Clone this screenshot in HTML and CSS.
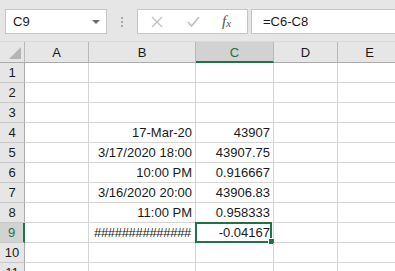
FILE: index.html
```html
<!DOCTYPE html>
<html lang="en">
<head>
    <meta charset="UTF-8">
    <title>Book1 - Excel</title>
    <link rel="stylesheet" href="styles.css">
</head>
<body>
    <div class="formula-bar">
        <div class="name-box">
            <span>C9</span>
            <svg class="drop" width="8" height="4" viewBox="0 0 8 4"><path d="M0 0h8L4 4z" fill="#6d6d6d"/></svg>
        </div>
        <div class="grip"><i></i><i></i><i></i></div>
        <div class="fx-buttons">
            <svg width="12" height="12" viewBox="0 0 12 12"><path d="M1 1l10 10M11 1L1 11" stroke="#c3c3c3" stroke-width="1.4"/></svg>
            <svg width="13" height="11" viewBox="0 0 13 11"><path d="M1 6l3.5 4L12 1" stroke="#c3c3c3" stroke-width="1.8" fill="none"/></svg>
            <span class="fx">f<sub>x</sub></span>
        </div>
        <div class="formula-input">=C6-C8</div>
    </div>

    <div class="sheet">
        <div class="corner"></div>
        <div class="col-head">A</div>
        <div class="col-head">B</div>
        <div class="col-head active">C</div>
        <div class="col-head">D</div>
        <div class="col-head">E</div>

        <div class="row-head">1</div><div class="cell"></div><div class="cell"></div><div class="cell"></div><div class="cell"></div><div class="cell"></div>
        <div class="row-head">2</div><div class="cell"></div><div class="cell"></div><div class="cell"></div><div class="cell"></div><div class="cell"></div>
        <div class="row-head">3</div><div class="cell"></div><div class="cell"></div><div class="cell"></div><div class="cell"></div><div class="cell"></div>
        <div class="row-head">4</div><div class="cell"></div><div class="cell">17-Mar-20</div><div class="cell">43907</div><div class="cell"></div><div class="cell"></div>
        <div class="row-head">5</div><div class="cell"></div><div class="cell">3/17/2020 18:00</div><div class="cell">43907.75</div><div class="cell"></div><div class="cell"></div>
        <div class="row-head">6</div><div class="cell"></div><div class="cell">10:00 PM</div><div class="cell">0.916667</div><div class="cell"></div><div class="cell"></div>
        <div class="row-head">7</div><div class="cell"></div><div class="cell">3/16/2020 20:00</div><div class="cell">43906.83</div><div class="cell"></div><div class="cell"></div>
        <div class="row-head">8</div><div class="cell"></div><div class="cell">11:00 PM</div><div class="cell">0.958333</div><div class="cell"></div><div class="cell"></div>
        <div class="row-head active">9</div><div class="cell"></div><div class="cell hashes">##############</div><div class="cell selected">-0.04167</div><div class="cell"></div><div class="cell"></div>
        <div class="row-head">10</div><div class="cell"></div><div class="cell"></div><div class="cell"></div><div class="cell"></div><div class="cell"></div>
        <div class="row-head">11</div><div class="cell"></div><div class="cell"></div><div class="cell"></div><div class="cell"></div><div class="cell"></div>
    </div>
</body>
</html>
```

FILE: styles.css
```css
body {
    margin: 0;
    font-family: "Liberation Sans", Arial, sans-serif;
    font-size: 13px;
    color: #1a1a1a;
    background-color: #fff;
    width: 395px;
    height: 271px;
    overflow: hidden;
}
.formula-bar {
    display: flex;
    align-items: flex-start;
    height: 42px;
    padding: 9px 0 0 5px;
    box-sizing: border-box;
    background-color: #e6e6e6;
    border-bottom: 1px solid #dadada;
}
.name-box {
    width: 102px;
    height: 25px;
    box-sizing: border-box;
    background-color: #fff;
    border: 1px solid #c6c6c6;
    display: flex;
    align-items: center;
    justify-content: space-between;
    padding: 0 6px 0 7px;
}
.grip {
    width: 30px;
    height: 25px;
    display: flex;
    flex-direction: column;
    align-items: center;
    justify-content: center;
    gap: 2px;
}
.grip i {
    width: 2px;
    height: 2px;
    background-color: #a8a8a8;
}
.fx-buttons {
    width: 111px;
    height: 25px;
    box-sizing: border-box;
    background-color: #fff;
    border: 1px solid #c6c6c6;
    display: flex;
    align-items: center;
    padding-left: 13px;
    gap: 24px;
}
.fx {
    font-family: "Liberation Serif", serif;
    font-style: italic;
    font-size: 15px;
    color: #555;
    margin-left: -2px;
}
.fx sub {
    font-size: 11px;
    vertical-align: -1px;
}
.formula-input {
    flex: 1;
    height: 25px;
    box-sizing: border-box;
    margin-left: 3px;
    background-color: #fff;
    border: 1px solid #c6c6c6;
    border-right: none;
    padding: 4px 0 0 11px;
}
.sheet {
    display: grid;
    grid-template-columns: 25px 64px 107px 78px 64px 64px;
    grid-template-rows: 21px repeat(11, 20px);
    width: 402px;
}
.corner,
.col-head,
.row-head,
.cell {
    box-sizing: border-box;
    border-right: 1px solid #d4d4d4;
    border-bottom: 1px solid #d4d4d4;
    position: relative;
}
.corner {
    background-color: #e6e6e6;
    border-right-color: #b8b8b8;
    border-bottom-color: #ababab;
}
.corner::after {
    content: "";
    position: absolute;
    right: 3px;
    bottom: 3px;
    border-left: 12px solid transparent;
    border-bottom: 12px solid #b5b5b5;
}
.col-head {
    background-color: #e6e6e6;
    border-right-color: #b8b8b8;
    border-bottom-color: #ababab;
    text-align: center;
    line-height: 21px;
}
.col-head.active {
    background-color: #d2d2d2;
    color: #217346;
    border-bottom: 2px solid #217346;
}
.row-head {
    background-color: #e6e6e6;
    border-right-color: #ababab;
    border-bottom-color: #c8c8c8;
    text-align: center;
    line-height: 20px;
}
.row-head.active {
    background-color: #d2d2d2;
    color: #217346;
    border-right: 2px solid #217346;
}
.cell {
    text-align: right;
    padding-right: 3px;
    line-height: 20px;
    white-space: nowrap;
}
.hashes {
    letter-spacing: -0.3px;
    padding-right: 4px;
}
.selected::before {
    content: "";
    position: absolute;
    left: -1px;
    top: -1px;
    right: 1px;
    bottom: -1px;
    border: 2px solid #217346;
}
.selected::after {
    content: "";
    position: absolute;
    right: -1px;
    bottom: -2px;
    width: 5px;
    height: 5px;
    background-color: #217346;
    border: 1px solid #fff;
    border-bottom: none;
    border-right: none;
}
```
